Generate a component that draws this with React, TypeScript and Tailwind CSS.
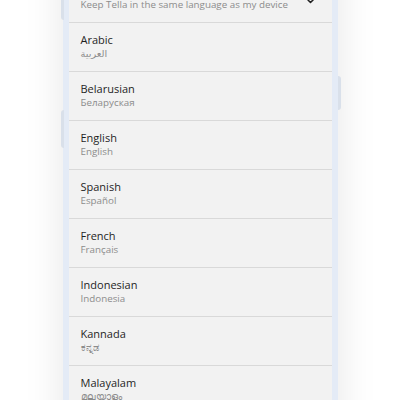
import { Check } from "lucide-react";

interface Language {
  name: string;
  native: string;
}

const languages: Language[] = [
  { name: "Arabic", native: "العربية" },
  { name: "Belarusian", native: "Беларуская" },
  { name: "English", native: "English" },
  { name: "Spanish", native: "Español" },
  { name: "French", native: "Français" },
  { name: "Indonesian", native: "Indonesia" },
  { name: "Kannada", native: "ಕನ್ನಡ" },
  { name: "Malayalam", native: "മലയാളം" },
  { name: "Portuguese", native: "Português" },
];

function LanguageRow({ name, native, selected }: { name: string; native: string; selected?: boolean }) {
  return (
    <div className="flex h-[49px] items-start justify-between border-b border-[#d9d9d9] pl-3 pr-[14px] pt-[10px]">
      <div className="flex flex-col">
        <span className="text-[11px] leading-[14px] font-medium text-[#1f1f1f]">{name}</span>
        <span className="text-[9.8px] leading-[14px] text-[#8c8c8c]">{native}</span>
      </div>
      {selected && <Check className="mt-[10px] h-3 w-3 text-[#222]" strokeWidth={3} />}
    </div>
  );
}

export default function App() {
  return (
    <div
      className="relative flex h-[400px] w-[400px] justify-center overflow-hidden bg-white"
      style={{ fontFamily: '"Open Sans", "Noto Sans", "DejaVu Sans", sans-serif' }}
    >
      <div className="relative mt-[-60px] h-[520px] w-[275px]">
        {/* side buttons */}
        <div className="absolute left-[-2px] top-[40px] h-[40px] w-[3px] rounded-l bg-[#d9e0ea]" />
        <div className="absolute left-[-2px] top-[170px] h-[38px] w-[3px] rounded-l bg-[#d9e0ea]" />
        <div className="absolute right-[-3px] top-[136px] h-[34px] w-[3px] rounded-r bg-[#d9e0ea]" />

        <div className="h-full w-full overflow-hidden rounded-[28px] border-[6px] border-[#e4ebf6] bg-[#f2f2f2] shadow-[0_0_40px_rgba(0,0,0,0.1)]">
          <div className="mt-[28px]">
            <LanguageRow name="Use device language" native="Keep Tella in the same language as my device" selected />
            {languages.map((l) => (
              <LanguageRow key={l.name} name={l.name} native={l.native} />
            ))}
          </div>
        </div>
      </div>
    </div>
  );
}
